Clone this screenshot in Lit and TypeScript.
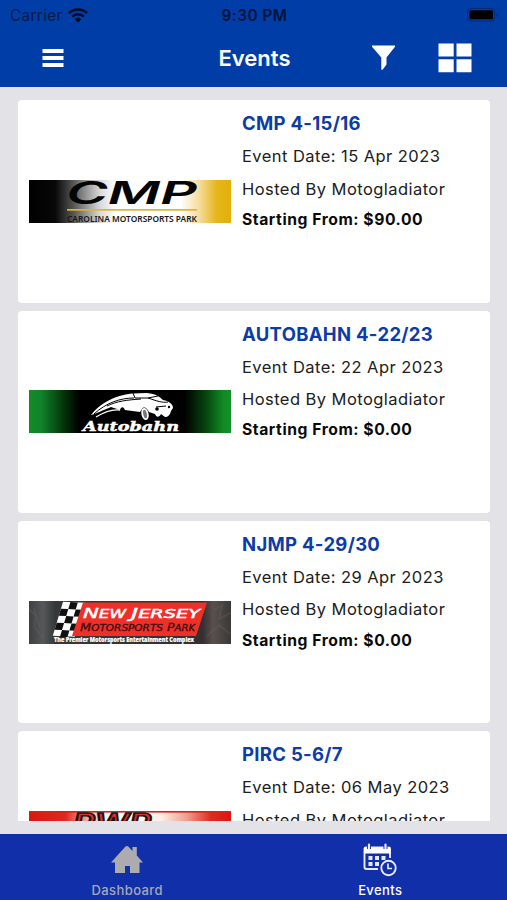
import { LitElement, html, svg, css } from "lit";
import { customElement, property } from "lit/decorators.js";

type Track = "cmp" | "autobahn" | "njmp" | "pirc";

interface TrackEvent {
  track: Track;
  title: string;
  date: string;
  host: string;
  price: string;
}

const EVENTS: TrackEvent[] = [
  { track: "cmp", title: "CMP 4-15/16", date: "15 Apr 2023", host: "Motogladiator", price: "$90.00" },
  { track: "autobahn", title: "AUTOBAHN 4-22/23", date: "22 Apr 2023", host: "Motogladiator", price: "$0.00" },
  { track: "njmp", title: "NJMP 4-29/30", date: "29 Apr 2023", host: "Motogladiator", price: "$0.00" },
  { track: "pirc", title: "PIRC 5-6/7", date: "06 May 2023", host: "Motogladiator", price: "$0.00" },
];

@customElement("track-banner")
class TrackBanner extends LitElement {
  @property() track: Track = "cmp";

  static styles = css`
    :host { display: block; width: 202px; height: 43px; }
    svg { display: block; width: 100%; height: 100%; }
    .wide { font-family: Inter, sans-serif; font-weight: 600; font-style: italic; }
    .caps { font-family: "Noto Sans", sans-serif; font-weight: 600; }
    .slab { font-family: "DejaVu Serif", serif; font-weight: 700; font-style: italic; }
    .tech { font-family: "DejaVu Sans", sans-serif; font-style: italic; }
    .small { font-family: "Open Sans", sans-serif; font-weight: 800; }
  `;

  private cmp() {
    return svg`
      <defs>
        <linearGradient id="g"><stop offset="0" stop-color="#000"/><stop offset=".13" stop-color="#080808"/>
          <stop offset=".22" stop-color="#555"/><stop offset=".35" stop-color="#d8d8d8"/><stop offset=".43" stop-color="#fff"/>
          <stop offset=".75" stop-color="#fff"/><stop offset=".84" stop-color="#f6dda0"/><stop offset=".93" stop-color="#e5b51a"/>
          <stop offset="1" stop-color="#e2b004"/></linearGradient>
      </defs>
      <rect width="202" height="43" fill="url(#g)"/>
      <text class="wide" x="37" y="24" font-size="31" textLength="131" lengthAdjust="spacingAndGlyphs" fill="#050505">CMP</text>
      <rect x="38" y="29" width="130" height="1.7" fill="#e2b32c"/>
      <text class="caps" x="38" y="41.8" font-size="8.6" textLength="130" lengthAdjust="spacingAndGlyphs" fill="#161616">CAROLINA MOTORSPORTS PARK</text>`;
  }

  private autobahn() {
    return svg`
      <defs>
        <linearGradient id="g"><stop offset="0" stop-color="#138c25"/><stop offset=".06" stop-color="#11832a"/><stop offset=".17" stop-color="#053509"/>
          <stop offset=".25" stop-color="#000"/><stop offset=".77" stop-color="#000"/><stop offset=".88" stop-color="#06480f"/>
          <stop offset=".96" stop-color="#118a22"/><stop offset="1" stop-color="#13902a"/></linearGradient>
      </defs>
      <rect width="202" height="43" fill="url(#g)"/>
      <path fill="#fff" d="M62 25C70 14 86 5 103 3.5L118 3C127 4 131 7 134 10C140 11 144 14 144 18L142 21C141 25 139 27 136 27L132 24C130 28 127 27 126 24L120 22C118 18 115 16 113 19L111 22L96 20C94 16 92 17 91 20L82 17C74 20 67 24 62 25Z"/>
      <path fill="none" stroke="#000" stroke-width="1" d="M65 24C77 13 91 8 105 8M78 16C88 11 98 10 112 9M104 3L106 8L119 8L129 6M119 8C128 11 133 13 139 12M127 17L137 16"/>
      <path fill="none" stroke="#fff" stroke-width="1.3" d="M67 27C75 22 84 19 91 20"/>
      <ellipse cx="116" cy="24" rx="3.6" ry="6.2" fill="#fff" transform="rotate(-12 116 24)"/>
      <ellipse cx="116" cy="24" rx="1.8" ry="4.4" fill="#777" transform="rotate(-12 116 24)"/>
      <circle cx="128" cy="19" r="1.8" fill="#000"/><circle cx="140" cy="17" r="1.2" fill="#000"/>
      <text class="slab" x="54" y="40.6" font-size="13.5" textLength="96" lengthAdjust="spacingAndGlyphs" fill="#fff" stroke="#fff" stroke-width=".5">Autobahn</text>`;
  }

  private njmp() {
    const squares = [];
    for (let r = 0; r < 5; r++)
      for (let c = 0; c < 3; c++)
        if ((r + c) % 2) squares.push(svg`<rect x=${c * 7.4} y=${r * 7} width="7.4" height="7" fill="#111"/>`);
    return svg`
      <defs>
        <linearGradient id="g"><stop offset="0" stop-color="#3e4142"/><stop offset=".07" stop-color="#555758"/><stop offset=".13" stop-color="#353839"/>
          <stop offset=".86" stop-color="#343032"/><stop offset=".91" stop-color="#59504c"/><stop offset="1" stop-color="#393938"/></linearGradient>
      </defs>
      <rect width="202" height="43" fill="url(#g)"/>
      <path d="M0 8L7 15L5 25L14 37M5 7L11 27M185 9L193 4L190 18L202 12M178 35L190 24L201 33" fill="none" stroke="#6a6c6b" stroke-width="2" opacity=".25"/>
      <g transform="matrix(1 .04 -.3 1 34 .8)"><rect width="22" height="34" fill="#fff"/>${squares}</g>
      <path d="M54 1.5H178L167 35H43Z" fill="#ef3029"/>
      <g class="tech" fill="#fff" stroke="#fff" stroke-width=".5">
        <text x="54" y="17" font-size="14.5" textLength="43" lengthAdjust="spacingAndGlyphs">N<tspan font-size="11.5">EW</tspan></text>
        <text x="102" y="17" font-size="14.5" textLength="69" lengthAdjust="spacingAndGlyphs">J<tspan font-size="11.5">ERSEY</tspan></text>
      </g>
      <g class="tech" fill="#3d0b0b" stroke="#3d0b0b" stroke-width=".3">
        <text x="51" y="30" font-size="10.5" textLength="83" lengthAdjust="spacingAndGlyphs">M<tspan font-size="8.5">OTORSPORTS</tspan></text>
        <text x="138" y="30" font-size="10.5" textLength="28" lengthAdjust="spacingAndGlyphs">P<tspan font-size="8.5">ARK</tspan></text>
      </g>
      <text class="small" x="25" y="41" font-size="7.4" textLength="140" lengthAdjust="spacingAndGlyphs" fill="#fff" stroke="#fff" stroke-width=".2">The Premier Motorsports Entertainment Complex</text>`;
  }

  private pirc() {
    return svg`
      <defs>
        <linearGradient id="g"><stop offset="0" stop-color="#d91710"/><stop offset=".18" stop-color="#de2a20"/><stop offset=".29" stop-color="#f4aaa0"/>
          <stop offset=".4" stop-color="#fff"/><stop offset=".65" stop-color="#fff0e8"/><stop offset=".78" stop-color="#efa090"/>
          <stop offset=".9" stop-color="#dc2d22"/><stop offset="1" stop-color="#d9150f"/></linearGradient>
      </defs>
      <rect width="202" height="43" fill="url(#g)"/><rect width="202" height="1.6" fill="#dc2018"/>
      <text class="wide" x="44" y="21" font-size="25" textLength="78" lengthAdjust="spacingAndGlyphs" fill="#e62b2b" stroke="#151515" stroke-width="1.7">PWP</text>`;
  }

  render() {
    return html`<svg viewBox="0 0 202 43" preserveAspectRatio="none">${this[this.track]()}</svg>`;
  }
}

@customElement("event-card")
class EventCard extends LitElement {
  @property({ attribute: false }) event!: TrackEvent;

  static styles = css`
    :host { display: flex; align-items: center; flex: none; box-sizing: border-box; height: 202.3px; padding: 0 11px; gap: 11px;
      background: #fff; border-radius: 4px; }
    .info { align-self: flex-start; padding-top: 7px; white-space: nowrap; color: #202020; }
    .title { height: 32px; line-height: 32px; font-size: 18.5px; font-weight: 650; letter-spacing: 0.3px; color: #0d3ca6; }
    .line { height: 32.3px; line-height: 34px; font-size: 16.5px; letter-spacing: 0.44px; }
    .price { height: 31px; line-height: 31px; font-size: 15.7px; font-weight: 650; letter-spacing: 0.55px; color: #0a0a0a; }
  `;

  render() {
    const e = this.event;
    return html`
      <track-banner .track=${e.track}></track-banner>
      <div class="info">
        <div class="title">${e.title}</div>
        <div class="line">Event Date: ${e.date}</div>
        <div class="line">Hosted By ${e.host}</div>
        <div class="price">Starting From: ${e.price}</div>
      </div>`;
  }
}

@customElement("app-root")
class AppRoot extends LitElement {
  static styles = css`
    :host { display: flex; flex-direction: column; height: 900px; overflow: hidden; background: #e3e2e7; font-family: Inter, "Liberation Sans", sans-serif; }
    svg { display: block; }
    header { flex: none; height: 87px; background: #003da6; }
    .status { display: grid; grid-template-columns: 1fr auto 1fr; align-items: center; height: 30px; padding: 0 8px 0 10px; font-size: 15.3px; color: #021b4b; }
    .carrier { display: flex; align-items: center; gap: 5px; letter-spacing: 0.35px; }
    .clock { font-weight: 600; font-size: 15.3px; letter-spacing: 0.5px; color: #01133a; }
    .battery { justify-self: end; }
    .nav { display: grid; grid-template-columns: 1fr auto 1fr; align-items: center; height: 56px; padding: 0 35px 0 42px; }
    .title { font-size: 22px; font-weight: 600; color: #fff; margin: 0 5px 0 0; }
    .actions { display: flex; align-items: center; justify-content: flex-end; gap: 42px; }
    main { flex: 1; min-height: 0; margin: 13.4px 17px 13px 18px; overflow: hidden; display: flex; flex-direction: column; gap: 8px; }
    footer { flex: none; height: 66px; display: grid; grid-template-columns: 1fr 1fr; background: #122faa; }
    .tab { display: flex; flex-direction: column; align-items: center; padding: 8px 0 0 1px; font-size: 13px; font-weight: 500; letter-spacing: 0.4px; color: #a6a8b5; }
    .tab svg { margin-bottom: 4px; }
    .tab.on { color: #fff; padding-left: 0; }
  `;

  render() {
    return html`
      <header>
        <div class="status">
          <div class="carrier">Carrier
            <svg width="20" height="15" viewBox="0 0 20 15" fill="none" stroke="#000b20" stroke-width="2.5">
              <path d="M1 5.2C6 .4 14 .4 19 5.2M4.2 8.6C7.4 5.6 12.6 5.6 15.8 8.6"/><path d="M6.8 11.2C8.6 9.4 11.4 9.4 13.2 11.2L10 14.4Z" fill="#000b20" stroke="none"/>
            </svg>
          </div>
          <div class="clock">9:30 PM</div>
          <svg class="battery" width="32" height="14" viewBox="0 0 32 14">
            <rect x=".5" y=".5" width="27" height="12.5" rx="3.5" fill="none" stroke="#022c78"/>
            <rect x="2.5" y="2.3" width="23.5" height="9" rx="1.5" fill="#000"/><path d="M29.5 5V9Q31 8.300 31 7T29.500 5" fill="#022c78"/>
          </svg>
        </div>
        <div class="nav">
          <svg width="22" height="20" viewBox="0 0 22 20" fill="#fff"><path d="M.5 1H21.500V5H.5ZM.5 8H21.500V12H.5ZM.5 15H21.500V19H.5Z"/></svg>
          <div class="title">Events</div>
          <div class="actions">
            <svg width="25" height="26" viewBox="0 0 25 26" fill="#fff"><path d="M1.500 .5H23.500Q24.500 .5 24 1.700L15.500 12.500V19.500L11.800 24.500Q10.500 25.500 10.300 24V12.500L1 1.700Q.5 .5 1.500 .5Z"/></svg>
            <svg width="34" height="30" viewBox="0 0 34 30" fill="#fff"><path d="M.5.500H15.700V13.500H.5ZM18.500.500H33.500V13.500H18.500ZM.5 16.300H15.700V29.300H.5ZM18.500 16.300H33.500V29.300H18.500Z"/></svg>
          </div>
        </div>
      </header>
      <main>${EVENTS.map((e) => html`<event-card .event=${e}></event-card>`)}</main>
      <footer>
        <div class="tab">
          <svg width="34" height="36" viewBox="0 0 34 36" fill="#acacb0"><path d="M1 20.500L15.500 4.500Q17 3.500 18.300 4.500L22.500 9V5H26.800V13.500L33 20.500H29.500V31H20V24H15V31H5V20.500Z"/></svg>
          <span>Dashboard</span>
        </div>
        <div class="tab on">
          <svg width="34" height="36" viewBox="0 0 34 36">
            <path d="M27 16V7Q27 5.500 25.500 5.500H3Q1.500 5.500 1.500 7V25Q1.500 27 3.500 27H15" fill="none" stroke="#e8ebff" stroke-width="1.900"/>
            <path d="M1 5.500H27.500V11.500H1Z" fill="#fff"/>
            <path d="M6 2V7M22.500 2V7" stroke="#122faa" stroke-width="4"/>
            <path d="M6 2.500V7M22.500 2.500V7" stroke="#e8ebff" stroke-width="2.200" stroke-linecap="round"/>
            <path d="M5.500 14H9.500V18H5.500ZM12 14H16V18H12ZM18.500 14H22.500V18H18.500ZM5.500 20H9.500V24H5.500ZM12 20H16V24H12Z" fill="#e8ebff"/>
            <circle cx="25.500" cy="26" r="9" fill="#122faa"/><circle cx="25.500" cy="26" r="7.200" fill="none" stroke="#e8ebff" stroke-width="1.900"/>
            <path d="M25 21.500V26.500H29" fill="none" stroke="#e8ebff" stroke-width="1.700"/>
          </svg>
          <span>Events</span>
        </div>
      </footer>`;
  }
}
